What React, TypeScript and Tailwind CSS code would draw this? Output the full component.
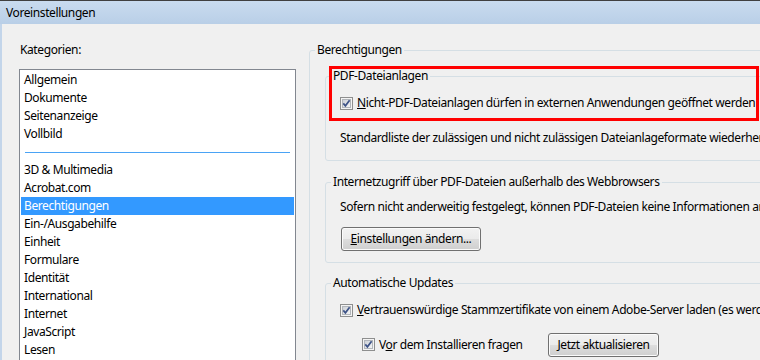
import React from 'react';

const categories = [
  'Allgemein',
  'Dokumente',
  'Seitenanzeige',
  'Vollbild',
  '-',
  '3D & Multimedia',
  'Acrobat.com',
  'Berechtigungen',
  'Ein-/Ausgabehilfe',
  'Einheit',
  'Formulare',
  'Identität',
  'International',
  'Internet',
  'JavaScript',
  'Lesen',
];

function CheckBox() {
  return (
    <svg width="13" height="13" viewBox="0 0 13 13" className="shrink-0">
      <defs>
        <linearGradient id="cbfill" x1="0" y1="0" x2="1" y2="1">
          <stop offset="0" stopColor="#cbcfd5" />
          <stop offset="1" stopColor="#f7f7f7" />
        </linearGradient>
      </defs>
      <rect x="0.5" y="0.5" width="12" height="12" fill="#f4f4f4" stroke="#8e8f8f" />
      <rect x="2.5" y="2.5" width="8" height="8" fill="url(#cbfill)" stroke="#b2b6bb" />
      <path d="M3.3 6.4 L5.4 8.8 L9.6 3.2" fill="none" stroke="#3d5387" strokeWidth="1.7" />
    </svg>
  );
}

function Button({ children, width }: { children: React.ReactNode; width: string }) {
  return (
    <button
      className={`${width} h-[24px] rounded-[3px] border border-[#707070] bg-[linear-gradient(to_bottom,#f2f2f2_0%,#ebebeb_50%,#dddddd_51%,#cfcfcf_100%)] shadow-[inset_0_0_0_1px_#fbfbfb] text-[12px] leading-[16px] tracking-[-0.4px] text-black`}
    >
      {children}
    </button>
  );
}

function CheckRow({ children, className = '' }: { children: React.ReactNode; className?: string }) {
  return (
    <div className={`flex items-center h-[16px] whitespace-nowrap ${className}`}>
      <CheckBox />
      <span className="ml-[4px]">{children}</span>
    </div>
  );
}

export default function App() {
  return (
    <div className="relative w-[760px] h-[360px] overflow-hidden bg-[#f0f0f0] font-['Noto_Sans',sans-serif] text-[12px] leading-[16px] tracking-[-0.4px] text-black flex flex-col border-t border-[#404040]">
      {/* title bar */}
      <div className="h-[23px] shrink-0 flex items-center pl-[6px] bg-[linear-gradient(to_bottom,#c9dbef,#b9cfe7)]">
        Voreinstellungen
      </div>

      <div className="flex flex-1 min-h-0 border-l-[2px] border-[#c3d5ea]">
        {/* categories */}
        <div className="ml-[17px] w-[277px] shrink-0">
          <div className="mt-[18px] pl-[1px]">Kategorien:</div>
          <div className="mt-[11px] border border-[#828790] bg-white p-[1px]">
            {categories.map((c) =>
              c === '-' ? (
                <div key={c} className="h-[18px] flex items-center px-[4px]">
                  <div className="h-[1px] w-full bg-[#4aa3f5]" />
                </div>
              ) : (
                <div
                  key={c}
                  className={`h-[18px] flex items-center pl-[3px] ${
                    c === 'Berechtigungen' ? 'bg-[#3399ff] text-white' : ''
                  }`}
                >
                  {c}
                </div>
              )
            )}
          </div>
        </div>

        {/* settings */}
        <div className="ml-[13px] mt-[18px] shrink-0">
          <fieldset className="w-[520px] border border-[#d5dfe5] rounded-[3px] pl-[5px] pb-[10px]">
            <legend className="px-[2px]">Berechtigungen</legend>

            <fieldset className="ml-[10px] mt-[10px] border border-[#d5dfe5] rounded-[3px] px-[5px] pb-[14px]">
              <legend className="px-[2px]">PDF-Dateianlagen</legend>
              <div className="pl-[9px]">
                <CheckRow className="mt-[11px]">
                  <u>N</u>icht-PDF-Dateianlagen dürfen in externen Anwendungen geöffnet werden
                </CheckRow>
                <div className="mt-[19px] whitespace-nowrap">
                  Standardliste der zulässigen und nicht zulässigen Dateianlageformate wiederherstellen
                </div>
              </div>
            </fieldset>

            <fieldset className="ml-[10px] mt-[13px] border border-[#d5dfe5] rounded-[3px] px-[5px] pb-[11px]">
              <legend className="px-[2px]">Internetzugriff über PDF-Dateien außerhalb des Webbrowsers</legend>
              <div className="pl-[9px]">
                <div className="mt-[9px] whitespace-nowrap">
                  Sofern nicht anderweitig festgelegt, können PDF-Dateien keine Informationen an das Internet senden
                </div>
                <div className="mt-[12px] pl-[1px]">
                  <Button width="w-[140px]">
                    <u>E</u>instellungen ändern...
                  </Button>
                </div>
              </div>
            </fieldset>

            <fieldset className="ml-[10px] mt-[12px] border border-[#d5dfe5] rounded-[3px] px-[5px] pb-[10px]">
              <legend className="px-[2px]">Automatische Updates</legend>
              <div className="pl-[9px]">
                <CheckRow className="mt-[11px]">
                  <u>V</u>ertrauenswürdige Stammzertifikate von einem Adobe-Server laden (es werden keine Daten gesendet)
                </CheckRow>
                <div className="mt-[14px] h-[25px] flex items-center pl-[22px]">
                  <CheckRow className="w-[186px]">
                    V<u>o</u>r dem Installieren fragen
                  </CheckRow>
                  <Button width="w-[111px]">
                    <u>J</u>etzt aktualisieren
                  </Button>
                </div>
              </div>
            </fieldset>
          </fieldset>
        </div>
      </div>

      {/* annotation frame */}
      <div className="absolute left-[329px] top-[65px] w-[430px] h-[55px] border-[3px] border-[#ff0000] pointer-events-none" />
    </div>
  );
}
